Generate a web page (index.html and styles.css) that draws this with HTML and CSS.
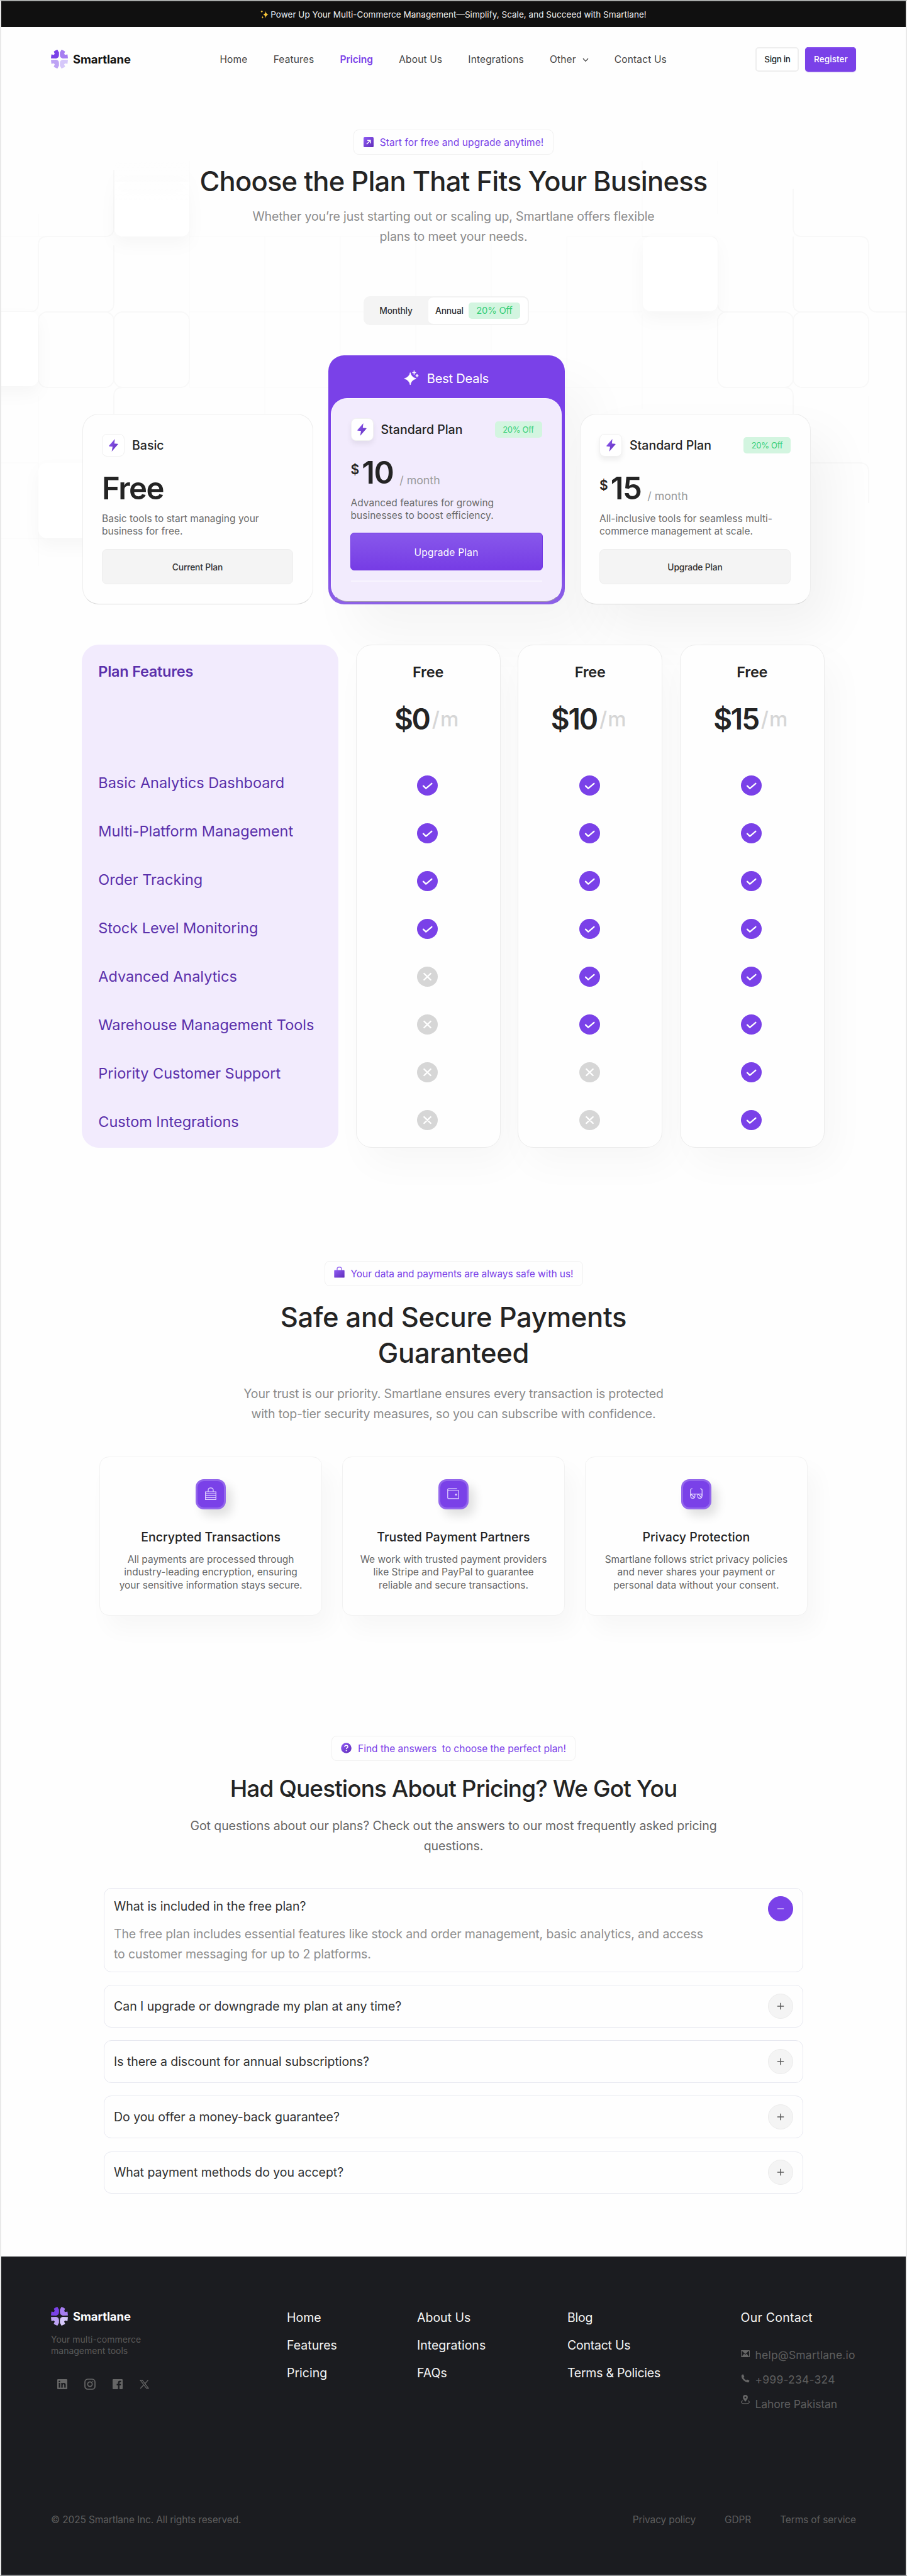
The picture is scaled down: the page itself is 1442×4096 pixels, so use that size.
FILE: index.html
```
<!DOCTYPE html>
<html lang="en">
<head>
<meta charset="utf-8">
<title>Smartlane – Pricing</title>
<link rel="stylesheet" href="styles.css">
</head>
<body>
<svg class="sprite" aria-hidden="true">
  <defs>
    <linearGradient id="violet" x1="0" y1="0" x2="1" y2="1"><stop offset="0" stop-color="#8f5cf5"/><stop offset="1" stop-color="#5f2cb8"/></linearGradient>
    <linearGradient id="fade" x1="0" y1="0" x2="0" y2="1"><stop offset="0" stop-color="#fff" stop-opacity="0"/><stop offset=".55" stop-color="#fff"/></linearGradient>
    <path id="petal" d="M0 13.8 .7 7.6 4.6 8.3 6 6.4 4.5 3Q7 .8 10.2 0L12.8 4.6V8.8Q12.5 13.3 8.2 13.9Z"/>
    <symbol id="logo" viewBox="0 0 27 30">
      <use href="#petal" fill="#7a41e8"/>
      <use href="#petal" fill="#a67df1" transform="matrix(-1 0 0 1 27 0)"/>
      <use href="#petal" fill="#bda2f4" transform="matrix(1 0 0 -1 0 30)"/>
      <use href="#petal" fill="#d6c8fa" transform="matrix(-1 0 0 -1 27 30)"/>
    </symbol>
    <symbol id="bolt" viewBox="0 0 15 20"><path d="M9.6 0 .3 10.8Q-.1 11.6.8 11.7L6 12.2 4.6 20 14.6 8.6Q15 7.8 14 7.7L8.8 7.2Z" fill="url(#violet)"/></symbol>
    <symbol id="check" viewBox="0 0 33 32"><ellipse cx="16.5" cy="16" rx="16.5" ry="16" fill="#7a41e8"/><path d="M10 16.6 14.2 20.6 23.4 12.8" fill="none" stroke="#fff" stroke-width="2.3" stroke-linecap="round" stroke-linejoin="round"/></symbol>
    <symbol id="cross" viewBox="0 0 33 32"><ellipse cx="16.5" cy="16" rx="16.5" ry="16" fill="#d6d6d6"/><path d="M11.3 11 21.7 21M21.7 11 11.3 21" fill="none" stroke="#fff" stroke-width="2.4" stroke-linecap="round"/></symbol>
    <symbol id="plus" viewBox="0 0 12 12"><path d="M6 .8V11.2M.8 6H11.2" stroke="#5c5c5c" stroke-width="1.5"/></symbol>
  </defs>
</svg>

<div class="page">
  <svg class="backdrop" width="1438" height="950" viewBox="2 2 1438 950" fill="none" aria-hidden="true">
    <g class="faint">
      <path d="M0 376H110M301 376H781M901 376H1020M301 496H1021M301 616H1141M0 736H60M0 856H130M301 376V616M421 376V660M541 376V560M661 376V560M781 376V560M901 376V660M1021 256V376M1141 256V340M61 340V376M61 630V900M1021 500V650M1381 630V720M301 256V376M541 616V560"/>
    </g>
    <g class="cell">
      <path d="M0 496H47Q61 496 61 482V390M75 376H167Q181 376 181 362V270"/>
      <path d="M61 390Q61 376 75 376M61 390V482M75 496H167Q181 496 181 482V390"/>
      <rect x="61" y="496" width="120" height="120" rx="14"/>
      <rect x="181" y="496" width="120" height="120" rx="14"/>
      <path d="M181 700V630Q181 616 195 616H290"/>
      <path d="M1141 390V482Q1141 496 1155 496M1021 376H1127Q1141 376 1141 390"/>
      <rect x="1141" y="496" width="120" height="120" rx="14"/>
      <rect x="1261" y="496" width="120" height="120" rx="14"/>
      <path d="M1261 300V362Q1261 376 1275 376H1367Q1381 376 1381 390V482Q1381 496 1395 496H1440M1261 376V482Q1261 496 1275 496M1150 616H1247Q1261 616 1261 630V700M1261 736H1367Q1381 736 1381 750V800"/>
    </g>
    <rect class="tile" x="182" y="256" width="119" height="120" rx="13" fill="url(#fade)"/>
    <rect class="tile" x="-60" y="496" width="121" height="118" rx="13" fill="#fff"/>
    <rect class="tile" x="61" y="736" width="120" height="120" rx="14" fill="#fff"/>
    <rect class="tile" x="1022" y="376" width="119" height="119" rx="13" fill="#fff"/>
  </svg>

  <div class="banner">
    <svg width="13" height="14" viewBox="0 0 13 14"><path d="M8.4 1.5Q8.8 6.4 12.6 7.2 8.8 8 8.4 13 8 8 4.4 7.2 8 6.4 8.4 1.5ZM2.2 0Q2.4 2 4 2.4 2.4 2.8 2.2 4.8 2 2.8.4 2.4 2 2 2.2 0ZM3.4 9.4Q3.6 11 4.8 11.4 3.6 11.8 3.4 13.4 3.2 11.8 2 11.4 3.2 11 3.4 9.4Z" fill="#fbc93a"/></svg>
    <span>Power Up Your Multi-Commerce Management—Simplify, Scale, and Succeed with Smartlane!</span>
  </div>

  <header class="header">
    <a class="brand"><svg width="27" height="30"><use href="#logo"/></svg>Smartlane</a>
    <nav class="nav">
      <a>Home</a><a>Features</a><a class="active">Pricing</a><a>About Us</a><a>Integrations</a>
      <a class="more">Other <svg width="10" height="7" viewBox="0 0 10 7"><path d="M1 1 5 5.4 9 1" fill="none" stroke="#444" stroke-width="1.3"/></svg></a>
      <a>Contact Us</a>
    </nav>
    <div class="actions"><a class="btn btn-light">Sign in</a><a class="btn btn-violet">Register</a></div>
  </header>

  <section class="hero">
    <div class="pill">
      <svg width="16" height="16" viewBox="0 0 16 16"><rect width="16" height="16" rx="1.6" fill="url(#violet)"/><path d="M5 11.2 10.6 5.4M6 5.2H10.8V10" fill="none" stroke="#fff" stroke-width="1.5"/></svg>
      <span>Start for free and upgrade anytime!</span>
    </div>
    <h1>Choose the Plan That Fits Your Business</h1>
    <p class="lead">Whether you’re just starting out or scaling up, Smartlane offers flexible<br>plans to meet your needs.</p>
    <div class="toggle">
      <span class="period">Monthly</span>
      <span class="period selected">Annual <em class="off">20% Off</em></span>
    </div>
  </section>

  <section class="plans">
    <article class="plan">
      <div class="plan-head"><i class="chip"><svg width="15" height="20"><use href="#bolt"/></svg></i><h3>Basic</h3></div>
      <div class="price"><b>Free</b></div>
      <p>Basic tools to start managing your<br>business for free.</p>
      <a class="plan-btn">Current Plan</a>
    </article>
    <div class="deal">
      <div class="deal-title">
        <svg width="23" height="24" viewBox="0 0 23 24"><path d="M9.2 3.5Q10.6 10.6 18.4 13 10.6 15.4 9.2 23 7.8 15.4 0 13 7.8 10.6 9.2 3.5Z" fill="#fff" stroke="#fff" stroke-width=".8" stroke-linejoin="round"/><path d="M15.4.3V6.7M12.4 3.5H18.4M20 6V11M17.6 8.5H22.4" stroke="#fff" stroke-width="1.5"/></svg>
        Best Deals
      </div>
      <article class="plan plan-deal">
        <div class="plan-head"><i class="chip raised"><svg width="15" height="20"><use href="#bolt"/></svg></i><h3>Standard Plan</h3><em class="off small">20% Off</em></div>
        <div class="price"><sup>$</sup><b>10</b><span>/ month</span></div>
        <p>Advanced features for growing<br>businesses to boost efficiency.</p>
        <a class="plan-btn primary">Upgrade Plan</a>
        <hr>
      </article>
    </div>
    <article class="plan lifted">
      <div class="plan-head"><i class="chip raised"><svg width="15" height="20"><use href="#bolt"/></svg></i><h3>Standard Plan</h3><em class="off small">20% Off</em></div>
      <div class="price"><sup>$</sup><b>15</b><span>/ month</span></div>
      <p>All-inclusive tools for seamless multi-<br>commerce management at scale.</p>
      <a class="plan-btn">Upgrade Plan</a>
    </article>
  </section>

  <section class="compare">
    <div class="features">
      <h3>Plan Features</h3>
      <ul>
        <li>Basic Analytics Dashboard</li><li>Multi-Platform Management</li><li>Order Tracking</li><li>Stock Level Monitoring</li>
        <li>Advanced Analytics</li><li>Warehouse Management Tools</li><li>Priority Customer Support</li><li>Custom Integrations</li>
      </ul>
    </div>
    <div class="tier">
      <h3>Free</h3>
      <div class="cost"><b>$0</b><span>/m</span></div>
      <div class="marks">
        <svg><use href="#check"/></svg><svg><use href="#check"/></svg><svg><use href="#check"/></svg><svg><use href="#check"/></svg>
        <svg><use href="#cross"/></svg><svg><use href="#cross"/></svg><svg><use href="#cross"/></svg><svg><use href="#cross"/></svg>
      </div>
    </div>
    <div class="tier">
      <h3>Free</h3>
      <div class="cost"><b>$10</b><span>/m</span></div>
      <div class="marks">
        <svg><use href="#check"/></svg><svg><use href="#check"/></svg><svg><use href="#check"/></svg><svg><use href="#check"/></svg>
        <svg><use href="#check"/></svg><svg><use href="#check"/></svg><svg><use href="#cross"/></svg><svg><use href="#cross"/></svg>
      </div>
    </div>
    <div class="tier">
      <h3>Free</h3>
      <div class="cost"><b>$15</b><span>/m</span></div>
      <div class="marks">
        <svg><use href="#check"/></svg><svg><use href="#check"/></svg><svg><use href="#check"/></svg><svg><use href="#check"/></svg>
        <svg><use href="#check"/></svg><svg><use href="#check"/></svg><svg><use href="#check"/></svg><svg><use href="#check"/></svg>
      </div>
    </div>
  </section>

  <section class="secure">
    <div class="pill pill-secure">
      <svg width="17" height="18" viewBox="0 0 17 18"><path d="M5 6V3.6Q5 .8 8.5.8T12 3.6V6" fill="none" stroke="#9a6cf3" stroke-width="1.4"/><rect x=".3" y="5.6" width="16.4" height="12" rx="1.2" fill="url(#violet)"/></svg>
      <span>Your data and payments are always safe with us!</span>
    </div>
    <h2>Safe and Secure Payments<br>Guaranteed</h2>
    <p class="lead">Your trust is our priority. Smartlane ensures every transaction is protected<br>with top-tier security measures, so you can subscribe with confidence.</p>
    <div class="cards">
      <article class="card">
        <i class="badge"><svg width="18" height="20" viewBox="0 0 18 20"><path d="M5 7V4.2Q5 .8 9 .8T13 4.2V7M.7 7H17.3V19.3H.7ZM.7 10H17.3M.7 13.2H17.3M.7 16.3H17.3"/></svg></i>
        <h3>Encrypted Transactions</h3>
        <p>All payments are processed through<br>industry-leading encryption, ensuring<br>your sensitive information stays secure.</p>
      </article>
      <article class="card">
        <i class="badge"><svg width="19" height="18" viewBox="0 0 19 18"><path d="M15.6 1.2H2.4Q.8 1.2.8 2.6T2.4 4H18.2V16.8H2Q.8 16.8.8 15.4V2.6"/><circle cx="14" cy="10.4" r=".9" fill="#fff"/></svg></i>
        <h3>Trusted Payment Partners</h3>
        <p>We work with trusted payment providers<br>like Stripe and PayPal to guarantee<br>reliable and secure transactions.</p>
      </article>
      <article class="card">
        <i class="badge"><svg width="20" height="18" viewBox="0 0 20 18"><path d="M3.8 1.2Q.8 1.2.8 3.4V13M16.2 1.2Q19.2 1.2 19.2 3.4V13M.8 9.6H19.2"/><path d="M1 9.8V13a3.4 3.4 0 0 0 6.8 0V9.8M12.2 9.8V13a3.4 3.4 0 0 0 6.8 0V9.8M2 10 6.6 15.2M13.4 10 18 15.2"/></svg></i>
        <h3>Privacy Protection</h3>
        <p>Smartlane follows strict privacy policies<br>and never shares your payment or<br>personal data without your consent.</p>
      </article>
    </div>
  </section>

  <section class="faq">
    <div class="pill pill-faq">
      <svg width="17" height="17" viewBox="0 0 17 17"><circle cx="8.5" cy="8.5" r="8.3" fill="url(#violet)"/><path d="M5.9 6.8Q6 4.3 8.5 4.3T11.1 6.5C11.1 8.2 8.6 8.2 8.6 10" fill="none" stroke="#fff" stroke-width="1.5"/><circle cx="8.6" cy="12.4" r="1" fill="#fff"/></svg>
      <span>Find the answers&nbsp; to choose the perfect plan!</span>
    </div>
    <h2>Had Questions About Pricing? We Got You</h2>
    <p class="lead dark">Got questions about our plans? Check out the answers to our most frequently asked pricing<br>questions.</p>
    <div class="questions">
      <div class="question open">
        <div>
          <h4>What is included in the free plan?</h4>
          <p>The free plan includes essential features like stock and order management, basic analytics, and access<br>to customer messaging for up to 2 platforms.</p>
        </div>
        <i class="knob"><svg width="12" height="12" viewBox="0 0 12 12"><path d="M.8 6H11.2" stroke="#cdb6f7" stroke-width="1.6"/></svg></i>
      </div>
      <div class="question"><h4>Can I upgrade or downgrade my plan at any time?</h4><i class="knob"><svg width="12" height="12"><use href="#plus"/></svg></i></div>
      <div class="question"><h4>Is there a discount for annual subscriptions?</h4><i class="knob"><svg width="12" height="12"><use href="#plus"/></svg></i></div>
      <div class="question"><h4>Do you offer a money-back guarantee?</h4><i class="knob"><svg width="12" height="12"><use href="#plus"/></svg></i></div>
      <div class="question"><h4>What payment methods do you accept?</h4><i class="knob"><svg width="12" height="12"><use href="#plus"/></svg></i></div>
    </div>
  </section>

  <footer class="footer">
    <div class="footer-top">
      <div class="about">
        <a class="brand light"><svg width="27" height="30"><use href="#logo"/></svg>Smartlane</a>
        <p>Your multi-commerce<br>management tools</p>
        <div class="social">
          <svg width="16" height="16" viewBox="0 0 16 16"><path fill-rule="evenodd" fill="#666" d="M1.2 0H14.8Q16 0 16 1.2V14.8Q16 16 14.8 16H1.2Q0 16 0 14.8V1.2Q0 0 1.2 0ZM2.4 6V13.4H4.7V6ZM3.5 2.4A1.3 1.3 0 1 0 3.5 5 1.3 1.3 0 1 0 3.5 2.4ZM6.4 6V13.4H8.7V9.6Q8.8 8 10 8T11.2 9.6V13.4H13.5V9Q13.4 5.9 10.8 5.9 9.4 5.9 8.7 7V6Z"/></svg>
          <svg width="18" height="18" viewBox="0 0 18 18" fill="none" stroke="#666" stroke-width="1.7"><rect x="1" y="1" width="16" height="16" rx="4.4"/><circle cx="9" cy="9" r="3.6"/><circle cx="13.4" cy="4.6" r=".5" fill="#666" stroke-width=".8"/></svg>
          <svg width="16" height="16" viewBox="0 0 16 16"><path fill="#666" d="M1.2 0H14.8Q16 0 16 1.2V14.8Q16 16 14.8 16H11V9.8H13.1L13.4 7.4H11V6Q11 4.9 12.2 4.9H13.5V2.7Q12.6 2.5 11.6 2.5 8.6 2.6 8.6 5.6V7.4H6.5V9.8H8.6V16H1.2Q0 16 0 14.8V1.2Q0 0 1.2 0Z"/></svg>
          <svg width="15" height="14" viewBox="0 0 15 14"><path d="M1 .6H4.2L14 13.4H10.8ZM13.6.4 8.4 6.2M6.4 8.2 1.2 13.8" fill="none" stroke="#666" stroke-width="1.3"/></svg>
        </div>
      </div>
      <ul class="links"><li>Home</li><li>Features</li><li>Pricing</li></ul>
      <ul class="links"><li>About Us</li><li>Integrations</li><li>FAQs</li></ul>
      <ul class="links"><li>Blog</li><li>Contact Us</li><li>Terms &amp; Policies</li></ul>
      <div class="contact">
        <h4>Our Contact</h4>
        <ul>
          <li><svg width="14" height="11" viewBox="0 0 14 11"><path d="M.5.5H13.5V10.5H.5Z" fill="none" stroke="#666"/><path d="M1 .6H13L7 6ZM1 10.4 5 5.4 7 7.2 9 5.4 13 10.4Z" fill="#666"/></svg>help@Smartlane.io</li>
          <li><svg width="14" height="14" viewBox="0 0 14 14"><path d="M1 1.6Q2.2.2 3.8.6L5.4 4.2 4.2 5.8Q5.6 8.6 8.4 9.8L9.8 8.4 13.4 10Q13.6 12 12 13.2 8 13.8 4 9.8T1 1.6Z" fill="#666"/></svg>+999-234-324</li>
          <li><svg class="pin" width="14" height="15" viewBox="0 0 14 15"><path fill-rule="evenodd" d="M7 0A3.9 3.9 0 0 1 10.9 3.9C10.9 6.6 8.6 8.4 7 11 5.4 8.4 3.1 6.6 3.1 3.9A3.9 3.9 0 0 1 7 0ZM7 2.4A1.5 1.5 0 1 0 7 5.4 1.5 1.5 0 1 0 7 2.4Z" fill="#666"/><path d="M3 9.4Q.6 10 .6 11.4.6 13.8 7 13.8T13.4 11.4Q13.4 10 11 9.4" fill="none" stroke="#666" stroke-width="1.1"/></svg>Lahore Pakistan</li>
        </ul>
      </div>
    </div>
    <div class="footer-bottom">
      <span>© 2025 Smartlane Inc. All rights reserved.</span>
      <div class="legal"><a>Privacy policy</a><a>GDPR</a><a>Terms of service</a></div>
    </div>
  </footer>
</div>
</body>
</html>
```
FILE: styles.css
```
* { box-sizing: border-box; margin: 0; padding: 0; }
body { background: #fff; font-family: "Inter", sans-serif; color: #242424; }
ul { list-style: none; }
em, i { font-style: normal; }
svg { display: block; flex: none; }
.sprite { position: absolute; width: 0; height: 0; }

.page { position: relative; width: 1442px; height: 4096px; overflow: hidden; background: #fefefe; border: 2px solid #e9e9e9; border-top-color: #a9acab; border-bottom-color: #8c8e90; }
.page > * { position: relative; }
.page > .backdrop { position: absolute; top: 0; left: 0; }
.faint { stroke: #fbfbfb; stroke-width: 1.5; }
.cell { stroke: #f8f8f8; stroke-width: 1.8; }
.tile { filter: drop-shadow(0 12px 12px rgba(0, 0, 0, .03)); }

/* Announcement and header */
.banner { height: 41px; background: #101010; color: #f2f2f2; display: flex; justify-content: center; align-items: center; gap: 3px; font-size: 13.5px; letter-spacing: .03px; white-space: nowrap; }
.header { height: 102px; padding: 0 78.5px 0 79px; display: flex; justify-content: space-between; align-items: center; }
.brand { display: flex; align-items: center; gap: 8px; font-size: 18.5px; font-weight: 700; letter-spacing: -.1px; color: #141414; }
.brand.light { color: #fff; }
.nav { display: flex; gap: 41.2px; font-size: 15.5px; line-height: 24px; letter-spacing: .14px; color: #444; margin-top: 2px; }
.nav .active { color: #7a41e8; font-weight: 600; letter-spacing: 0; }
.more { display: flex; align-items: center; gap: 10px; }
.actions { display: flex; gap: 10px; }
.btn { height: 39px; border-radius: 5px; display: flex; align-items: center; justify-content: center; font-size: 13.5px; font-weight: 500; }
.btn-light { width: 69px; background: #fff; border: 2px solid #eee; color: #242424; letter-spacing: -.35px; }
.btn-violet { width: 81px; background: #7a41e8; color: #fff; letter-spacing: .1px; box-shadow: inset 0 1.5px 0 #8a56ee, 0 1px 1px #cbb6f4; }

/* Section headings */
.hero, .secure, .faq { display: flex; flex-direction: column; align-items: center; text-align: center; white-space: nowrap; }
.hero { padding-top: 61px; }
.secure { padding-top: 180px; }
.faq { padding-top: 191px; }
.pill { height: 40px; width: 318px; padding-top: 1px; border: 1.5px solid #f1f1f1; border-radius: 8px; background: #fefefe; display: flex; justify-content: center; align-items: center; gap: 10px; color: #7a41e8; font-size: 15.5px; letter-spacing: .09px; }
.pill svg { margin-bottom: 2px; }
.pill-secure { width: 411px; letter-spacing: -.07px; }
.pill-secure svg { margin-bottom: 6px; }
.pill-faq { width: 388px; letter-spacing: 0; }
h1, h2 { font-weight: 500; line-height: 56px; color: #242424; }
h1 { margin-top: 14px; font-size: 43.5px; letter-spacing: -.78px; }
h2 { margin-top: 21px; font-size: 43.5px; line-height: 57px; letter-spacing: -.3px; }
.lead { margin-top: 12px; font-size: 19.5px; line-height: 32px; letter-spacing: -.15px; color: #8c8c8c; }
.secure .lead { margin-top: 20px; letter-spacing: -.17px; }
.faq h2 { margin-top: 15px; font-size: 37px; letter-spacing: -.9px; }
.faq .lead { margin-top: 15px; letter-spacing: -.07px; color: #666; }

.toggle { margin: 79px 23px 0 0; width: 263px; height: 46px; border-radius: 10px; background: #f4f4f4; display: flex; font-size: 13.8px; font-weight: 500; letter-spacing: -.2px; color: #333; }
.period { flex: none; width: 103px; display: flex; align-items: center; justify-content: center; }
.period.selected { width: 160px; gap: 8px; padding-right: 1px; background: #fff; border: 2.5px solid #f2f2f2; border-left: 0; border-radius: 8px 10px 10px 8px; }
.off { display: flex; align-items: center; justify-content: center; width: 82px; height: 26px; border-radius: 5px; background: #d3f5e0; color: #38cf78; font-size: 14.8px; font-weight: 400; letter-spacing: -.2px; }
.off.small { width: 75px; font-size: 13px; letter-spacing: -.3px; margin-left: auto; }

/* Plans */
.plans { display: flex; align-items: flex-end; gap: 24px; margin: 48px 0 0 128.5px; width: 1160px; white-space: nowrap; }
.plan { width: 367px; height: 303.5px; padding: 31px 30.5px 0; background: #fefefe; border: 1px solid #ededed; border-bottom: 1.5px solid #d9d9d9; border-radius: 26px; }
.lifted { box-shadow: 30px 40px 80px rgba(0, 0, 0, .05); }
.plan-head { display: flex; align-items: center; height: 36px; }
.chip { width: 36px; height: 36px; border: 1.5px solid #f1f1f1; border-radius: 8px; background: #fff; display: flex; align-items: center; justify-content: center; }
.chip.raised { box-shadow: 0 5px 8px rgba(0, 0, 0, .07); }
.plan-head h3 { margin-left: 12px; font-size: 19.5px; font-weight: 500; }
.price { display: flex; height: 56px; margin-top: 23px; line-height: 56px; }
.price b { font-size: 49px; font-weight: 600; letter-spacing: -1.5px; }
.price sup { font-size: 21px; font-weight: 600; line-height: 46px; margin-right: 4px; }
.price span { font-size: 17.8px; line-height: 79px; color: #9a9a9a; margin-left: 10px; }
.plan p { margin-top: 10px; margin-right: -20px; font-size: 15.5px; line-height: 20px; color: #6b6b6b; letter-spacing: .02px; }
.plan-btn { margin-top: 18px; height: 56px; border: 1.5px solid #eee; border-radius: 8px; background: #f4f4f4; display: flex; align-items: center; justify-content: center; font-size: 13.8px; font-weight: 500; letter-spacing: -.15px; color: #333; padding-top: 2px; }
.deal { width: 376px; height: 396px; padding: 68px 4.5px 4px; border-radius: 25px; background: linear-gradient(#7a41e8 80%, #8d62e6); box-shadow: 40px 50px 80px rgba(0, 0, 0, .04); }
.deal-title { margin-top: -68px; height: 68px; padding: 6px 0 0 1px; display: flex; align-items: center; justify-content: center; gap: 13px; color: #fff; font-size: 20px; letter-spacing: -.2px; }
.deal-title svg { margin-bottom: 3px; }
.plan-deal { height: 324px; background: #f2ebfd; border-color: #fbf8ff; border-bottom-color: #9c92ac; padding-top: 31px; }
.plan-btn.primary { height: 60px; margin: 17px -1px 0; border: 1.5px solid #7237e3; background: linear-gradient(#8858eb, #763ce5); color: #fff; border-radius: 6px; font-size: 15.5px; font-weight: 400; letter-spacing: .22px; }
.plan hr { margin-top: 16px; border: 0; height: 1.5px; background: #f8f4fe; }

/* Comparison */
.compare { display: flex; gap: 27.6px; margin: 64px 0 0 128.3px; white-space: nowrap; }
.features { width: 407.7px; height: 800px; padding: 25px 26px; border-radius: 27px; background: #f2ebfd; color: #5a30ab; }
.features h3 { font-size: 23.5px; font-weight: 600; line-height: 36px; letter-spacing: -.25px; }
.features ul { margin-top: 121px; }
.features li { font-size: 23.5px; line-height: 76.97px; letter-spacing: -.02px; }
.tier { width: 230px; height: 800px; padding-top: 25px; border: 1px solid #ececec; border-radius: 25px; background: #fefefe; text-align: center; box-shadow: 16px 26px 60px rgba(0, 0, 0, .03); }
.tier h3 { font-size: 23.5px; font-weight: 600; line-height: 36px; letter-spacing: -.2px; }
.cost { margin-top: 26px; height: 60px; display: flex; align-items: center; justify-content: center; padding-right: 4px; }
.cost b { font-size: 46px; font-weight: 600; letter-spacing: -2.2px; margin-right: 4px; }
.cost span { font-size: 33px; font-weight: 500; letter-spacing: 1px; color: #d6d6d6; }
.marks { margin-top: 60px; display: flex; flex-direction: column; align-items: center; gap: 44px; padding-right: 2px; }
.marks svg { width: 33px; height: 32px; }

/* Security cards */
.cards { margin-top: 51.5px; display: flex; gap: 32.5px; }
.card { width: 353.4px; height: 253px; padding-top: 35.5px; border: 1px solid #f2f2f2; border-radius: 15px; background: #fefefe; box-shadow: 14px 22px 36px rgba(0, 0, 0, .03); display: flex; flex-direction: column; align-items: center; }
.badge { width: 48px; height: 48px; border: 3px solid #9366ec; border-radius: 13px; background: #7a41e8; display: flex; align-items: center; justify-content: center; box-shadow: 9px 10px 16px rgba(0, 0, 0, .12); }
.badge svg { fill: none; stroke: #e6daff; stroke-width: 1.2; margin-top: -2px; }
.card h3 { margin-top: 28px; font-size: 19.5px; font-weight: 500; line-height: 32px; letter-spacing: .03px; }
.card p { margin-top: 10px; font-size: 15.5px; line-height: 20.3px; color: #666; }

/* FAQ */
.questions { margin-top: 51px; width: 1112px; display: flex; flex-direction: column; gap: 20.8px; text-align: left; }
.question { height: 67.3px; padding: 0 15px; border: 1px solid #e7e8f0; border-radius: 12px; display: flex; justify-content: space-between; align-items: center; }
.question.open { height: 134px; align-items: flex-start; padding-top: 12.5px; }
.question h4 { font-size: 19.5px; font-weight: 400; line-height: 32px; letter-spacing: -.03px; color: #303030; }
.question p { margin-top: 12px; font-size: 19.5px; line-height: 32px; letter-spacing: -.13px; color: #8f8f8f; }
.knob { width: 40px; height: 40px; border-radius: 50%; background: #f4f4f4; border: 1px solid #ececec; display: flex; align-items: center; justify-content: center; }
.open .knob { background: #7a41e8; border-color: #7a41e8; }

/* Footer */
.footer { margin-top: 100px; height: 506px; background: #1b1c20; color: #f4f4f4; white-space: nowrap; }
.footer-top { height: 403px; padding: 80px 79px 0; display: flex; }
.about { width: 375px; }
.about p { margin-top: 13px; font-size: 14px; line-height: 18.3px; color: #5a5a5a; }
.social { margin: 35px 0 0 10px; display: flex; align-items: center; gap: 27px; }
.links { font-size: 19.5px; }
.links li { line-height: 44px; }
.links, .contact { margin-top: -5px; }
.links:nth-child(2) { width: 207px; }
.links:nth-child(3) { width: 239px; }
.links:nth-child(4) { width: 275.5px; letter-spacing: -.25px; }
.contact h4 { font-size: 19.5px; line-height: 44px; font-weight: 400; letter-spacing: .25px; }
.contact ul { margin-top: 18px; }
.contact li { display: flex; align-items: center; gap: 9px; line-height: 39px; font-size: 17.5px; letter-spacing: .2px; color: #5e5e5e; }
.contact li svg { margin-bottom: 3px; }
.contact li .pin { margin-bottom: 14px; }
.contact li:last-child { letter-spacing: -.1px; }
.footer-bottom { padding: 0 79px; display: flex; justify-content: space-between; line-height: 31px; font-size: 15.5px; letter-spacing: -.14px; color: #5e5e5e; }
.legal { display: flex; gap: 46px; }
```
